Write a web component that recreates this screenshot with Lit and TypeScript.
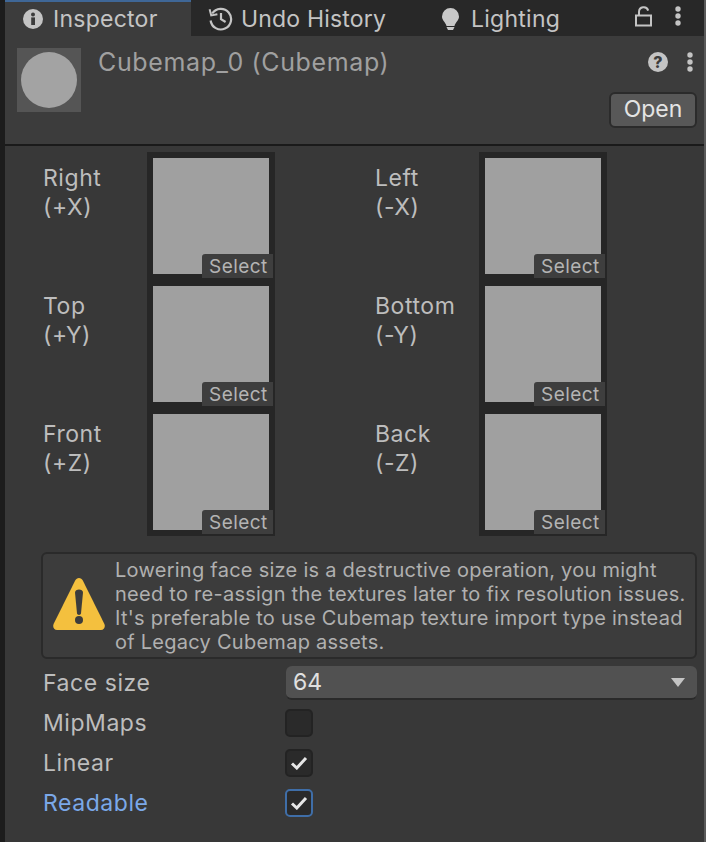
import { LitElement, html, css, svg } from 'lit';
import { customElement } from 'lit/decorators.js';

const kebab = html`<svg class="kebab" width="6" height="20" viewBox="0 0 6 20">
  <circle cx="3" cy="3" r="2.7"></circle><circle cx="3" cy="10" r="2.7"></circle><circle cx="3" cy="17" r="2.7"></circle>
</svg>`;

const check = svg`<svg width="18" height="14" viewBox="0 0 18 14"><path d="M2 7.5 L6.8 12 L16 2" fill="none" stroke="#e6e6e6" stroke-width="3"></path></svg>`;

@customElement('app-root')
export class AppRoot extends LitElement {
  face(name: string, axis: string) {
    return html`<div class="face">
      <div class="face-label">${name}<br />${axis}</div>
      <div class="tile">
        <div class="swatch"></div>
        <div class="select">Select</div>
      </div>
    </div>`;
  }

  render() {
    return html`
      <div class="panel">
        <div class="tabs">
          <div class="tab active">
            <svg width="20" height="20" viewBox="0 0 20 20">
              <circle cx="10" cy="10" r="10" fill="#c4c4c4"></circle>
              <rect x="8.2" y="8.4" width="3.8" height="7.6" fill="#3c3c3c"></rect>
              <circle cx="10" cy="5.4" r="2" fill="#3c3c3c"></circle>
            </svg>
            <span>Inspector</span>
          </div>
          <div class="tab history">
            <svg width="25" height="25" viewBox="0 0 25 25" fill="none" stroke="#c4c4c4" stroke-width="2.2">
              <path d="M4.2 7.5 A10.3 10.3 0 1 1 2.6 14.5"></path>
              <path d="M1.6 3.2 L3.2 9.4 L9.4 8.2" stroke-width="2"></path>
              <path d="M13 7 V13.2 L17.6 16"></path>
            </svg>
            <span>Undo History</span>
          </div>
          <div class="tab lighting">
            <svg width="17" height="22" viewBox="0 0 17 22">
              <path d="M8.5 0 A8.5 8.5 0 0 1 17 8.5 C17 12.5 13.5 14 12.5 18 H4.5 C3.5 14 0 12.5 0 8.5 A8.5 8.5 0 0 1 8.5 0 Z" fill="#c8c8c8"></path>
              <path d="M4.5 19 H12.5 L11 22 H6 Z" fill="#c8c8c8"></path>
            </svg>
            <span>Lighting</span>
          </div>
          <div class="tab-tools">
            <svg width="18" height="21" viewBox="0 0 18 21" fill="none" stroke="#c4c4c4" stroke-width="2">
              <rect x="1" y="9.5" width="15" height="10"></rect>
              <path d="M4 9.5 V6 A4.7 4.7 0 0 1 13.2 4.6"></path>
            </svg>
            ${kebab}
          </div>
        </div>

        <div class="header">
          <div class="thumb"><div class="ball"></div></div>
          <div class="title">Cubemap_0 (Cubemap)</div>
          <div class="actions">
            <div class="icons">
              <div class="help">?</div>
              ${kebab}
            </div>
            <div class="open">Open</div>
          </div>
        </div>

        <div class="body">
          <div class="faces">
            ${this.face('Right', '(+X)')} ${this.face('Left', '(-X)')}
            ${this.face('Top', '(+Y)')} ${this.face('Bottom', '(-Y)')}
            ${this.face('Front', '(+Z)')} ${this.face('Back', '(-Z)')}
          </div>

          <div class="helpbox">
            <svg width="52" height="54" viewBox="0 0 52 54">
              <path d="M26 2 C27.6 2 29 3 29.8 4.6 L51.4 48 C52.6 51 51 54 48 54 H4 C1 54 -0.6 51 0.6 48 L22.2 4.6 C23 3 24.4 2 26 2 Z" fill="#f4c03e"></path>
              <path d="M22 16.5 C22 12.6 30 12.6 30 16.5 L28 37.5 C27.8 39.4 24.2 39.4 24 37.5 Z" fill="#3c3c3c"></path>
              <circle cx="26" cy="44" r="4" fill="#3c3c3c"></circle>
            </svg>
            <div class="message">
              Lowering face size is a destructive operation, you might<br />
              need to re-assign the textures later to fix resolution issues.<br />
              It's preferable to use Cubemap texture import type instead<br />
              of Legacy Cubemap assets.
            </div>
          </div>

          <div class="row first">
            <div class="label">Face size</div>
            <div class="dropdown">
              <span>64</span>
              <svg width="14" height="9" viewBox="0 0 14 9"><path d="M0 0 H14 L7 9 Z" fill="#c4c4c4"></path></svg>
            </div>
          </div>
          <div class="row">
            <div class="label">MipMaps</div>
            <div class="checkbox"></div>
          </div>
          <div class="row">
            <div class="label">Linear</div>
            <div class="checkbox">${check}</div>
          </div>
          <div class="row">
            <div class="label blue">Readable</div>
            <div class="checkbox focused">${check}</div>
          </div>
        </div>
      </div>
    `;
  }

  static styles = css`
    :host {
      display: block;
      width: 706px;
      height: 842px;
      overflow: hidden;
      font-family: Inter, 'Noto Sans', sans-serif;
      background: #383838;
    }

    .panel {
      height: 842px;
      box-sizing: border-box;
      border-left: 5px solid #1c1c1c;
      border-right: 2px solid #5a5a5a;
      display: flex;
      flex-direction: column;
      background: #383838;
    }

    .tabs {
      display: flex;
      height: 36px;
      background: #282828;
      flex: none;
    }

    .tab {
      display: flex;
      align-items: center;
      color: #c4c4c4;
      font-size: 23px;
      letter-spacing: 0.25px;
      white-space: nowrap;
    }

    .tab.active {
      box-sizing: border-box;
      width: 186px;
      padding: 0 0 0 18px;
      gap: 10px;
      background: #3c3c3c;
      border-top: 2px solid #3f6797;
    }

    .tab.history {
      margin-left: 17px;
      padding-top: 1px;
      gap: 8px;
      letter-spacing: 0.18px;
    }

    .tab.lighting {
      margin-left: 56px;
      padding-top: 1px;
      gap: 12px;
    }

    .tab-tools {
      margin-left: auto;
      display: flex;
      align-items: center;
      gap: 22px;
      padding-right: 23px;
      padding-bottom: 4px;
    }

    .kebab {
      fill: #c4c4c4;
      display: block;
    }

    .header {
      flex: none;
      box-sizing: border-box;
      height: 110px;
      padding: 12px 7px 0 12px;
      display: flex;
      background: #3c3c3c;
      border-bottom: 2px solid #1a1a1a;
    }

    .thumb {
      width: 64px;
      height: 64px;
      background: #555555;
      display: flex;
      align-items: center;
      justify-content: center;
      flex: none;
    }

    .ball {
      width: 56px;
      height: 56px;
      border-radius: 50%;
      background: #a3a3a3;
    }

    .title {
      margin-left: 17px;
      color: #a0a0a0;
      font-size: 25px;
      line-height: 28px;
      letter-spacing: 0.63px;
      white-space: nowrap;
    }

    .actions {
      margin-left: auto;
      display: flex;
      flex-direction: column;
      align-items: flex-end;
      gap: 16px;
    }

    .icons {
      display: flex;
      align-items: center;
      gap: 19px;
      height: 28px;
      padding-right: 4px;
    }

    .help {
      width: 20px;
      height: 20px;
      border-radius: 50%;
      background: #c4c4c4;
      color: #3c3c3c;
      font-size: 16px;
      font-weight: 800;
      line-height: 20px;
      text-align: center;
    }

    .open {
      box-sizing: border-box;
      width: 88px;
      height: 36px;
      border: 2px solid #2b2b2b;
      border-radius: 6px;
      background: #585858;
      color: #e4e4e4;
      font-size: 23px;
      line-height: 30px;
      text-align: center;
    }

    .body {
      flex: 1;
      padding: 6px 7px 0 36px;
    }

    .faces {
      display: grid;
      grid-template-columns: 332px 1fr;
      grid-auto-rows: 128px;
      margin-left: 2px;
    }

    .face {
      display: flex;
    }

    .face-label {
      box-sizing: border-box;
      width: 104px;
      padding-top: 12px;
      color: #bdbdbd;
      font-size: 23px;
      line-height: 29px;
      letter-spacing: 0.55px;
    }

    .tile {
      position: relative;
      box-sizing: border-box;
      width: 128px;
      height: 128px;
      border: 6px solid #262626;
    }

    .swatch {
      width: 100%;
      height: 100%;
      background: #a0a0a0;
    }

    .select {
      position: absolute;
      right: -4px;
      bottom: -4px;
      width: 71px;
      height: 24px;
      box-sizing: border-box;
      padding-left: 7px;
      background: #3e3e3e;
      border-radius: 3px 0 0 0;
      color: #b4b4b4;
      font-size: 19px;
      line-height: 26px;
      letter-spacing: 0.45px;
    }

    .helpbox {
      box-sizing: border-box;
      display: flex;
      align-items: center;
      gap: 10px;
      height: 107px;
      margin: 16px 0 0 0;
      padding-left: 10px;
      border: 2px solid #2a2a2a;
      border-radius: 6px;
      background: #3c3c3c;
    }

    .helpbox svg {
      flex: none;
      margin-bottom: 5px;
    }

    .message {
      color: #b0b0b0;
      font-size: 20px;
      line-height: 24px;
      letter-spacing: 0.26px;
      white-space: nowrap;
    }

    .row {
      display: flex;
      align-items: center;
      height: 40px;
      margin-left: 2px;
    }

    .row.first {
      margin-top: 4px;
    }

    .label {
      width: 242px;
      flex: none;
      color: #bdbdbd;
      font-size: 23px;
      letter-spacing: 0.55px;
    }

    .label.blue {
      color: #7ba8e8;
    }

    .dropdown {
      flex: 1;
      box-sizing: border-box;
      height: 34px;
      margin-left: 1px;
      padding: 0 12px 0 7px;
      display: flex;
      align-items: center;
      justify-content: space-between;
      background: #515151;
      border-radius: 6px;
      border-bottom: 2px solid #2a2a2a;
      color: #e0e0e0;
      font-size: 23px;
    }

    .checkbox {
      box-sizing: border-box;
      width: 28px;
      height: 28px;
      display: flex;
      align-items: center;
      justify-content: center;
      background: #2a2a2a;
      border: 2px solid #232323;
      border-radius: 5px;
    }

    .checkbox.focused {
      border-color: #3f6ea8;
    }
  `;
}
